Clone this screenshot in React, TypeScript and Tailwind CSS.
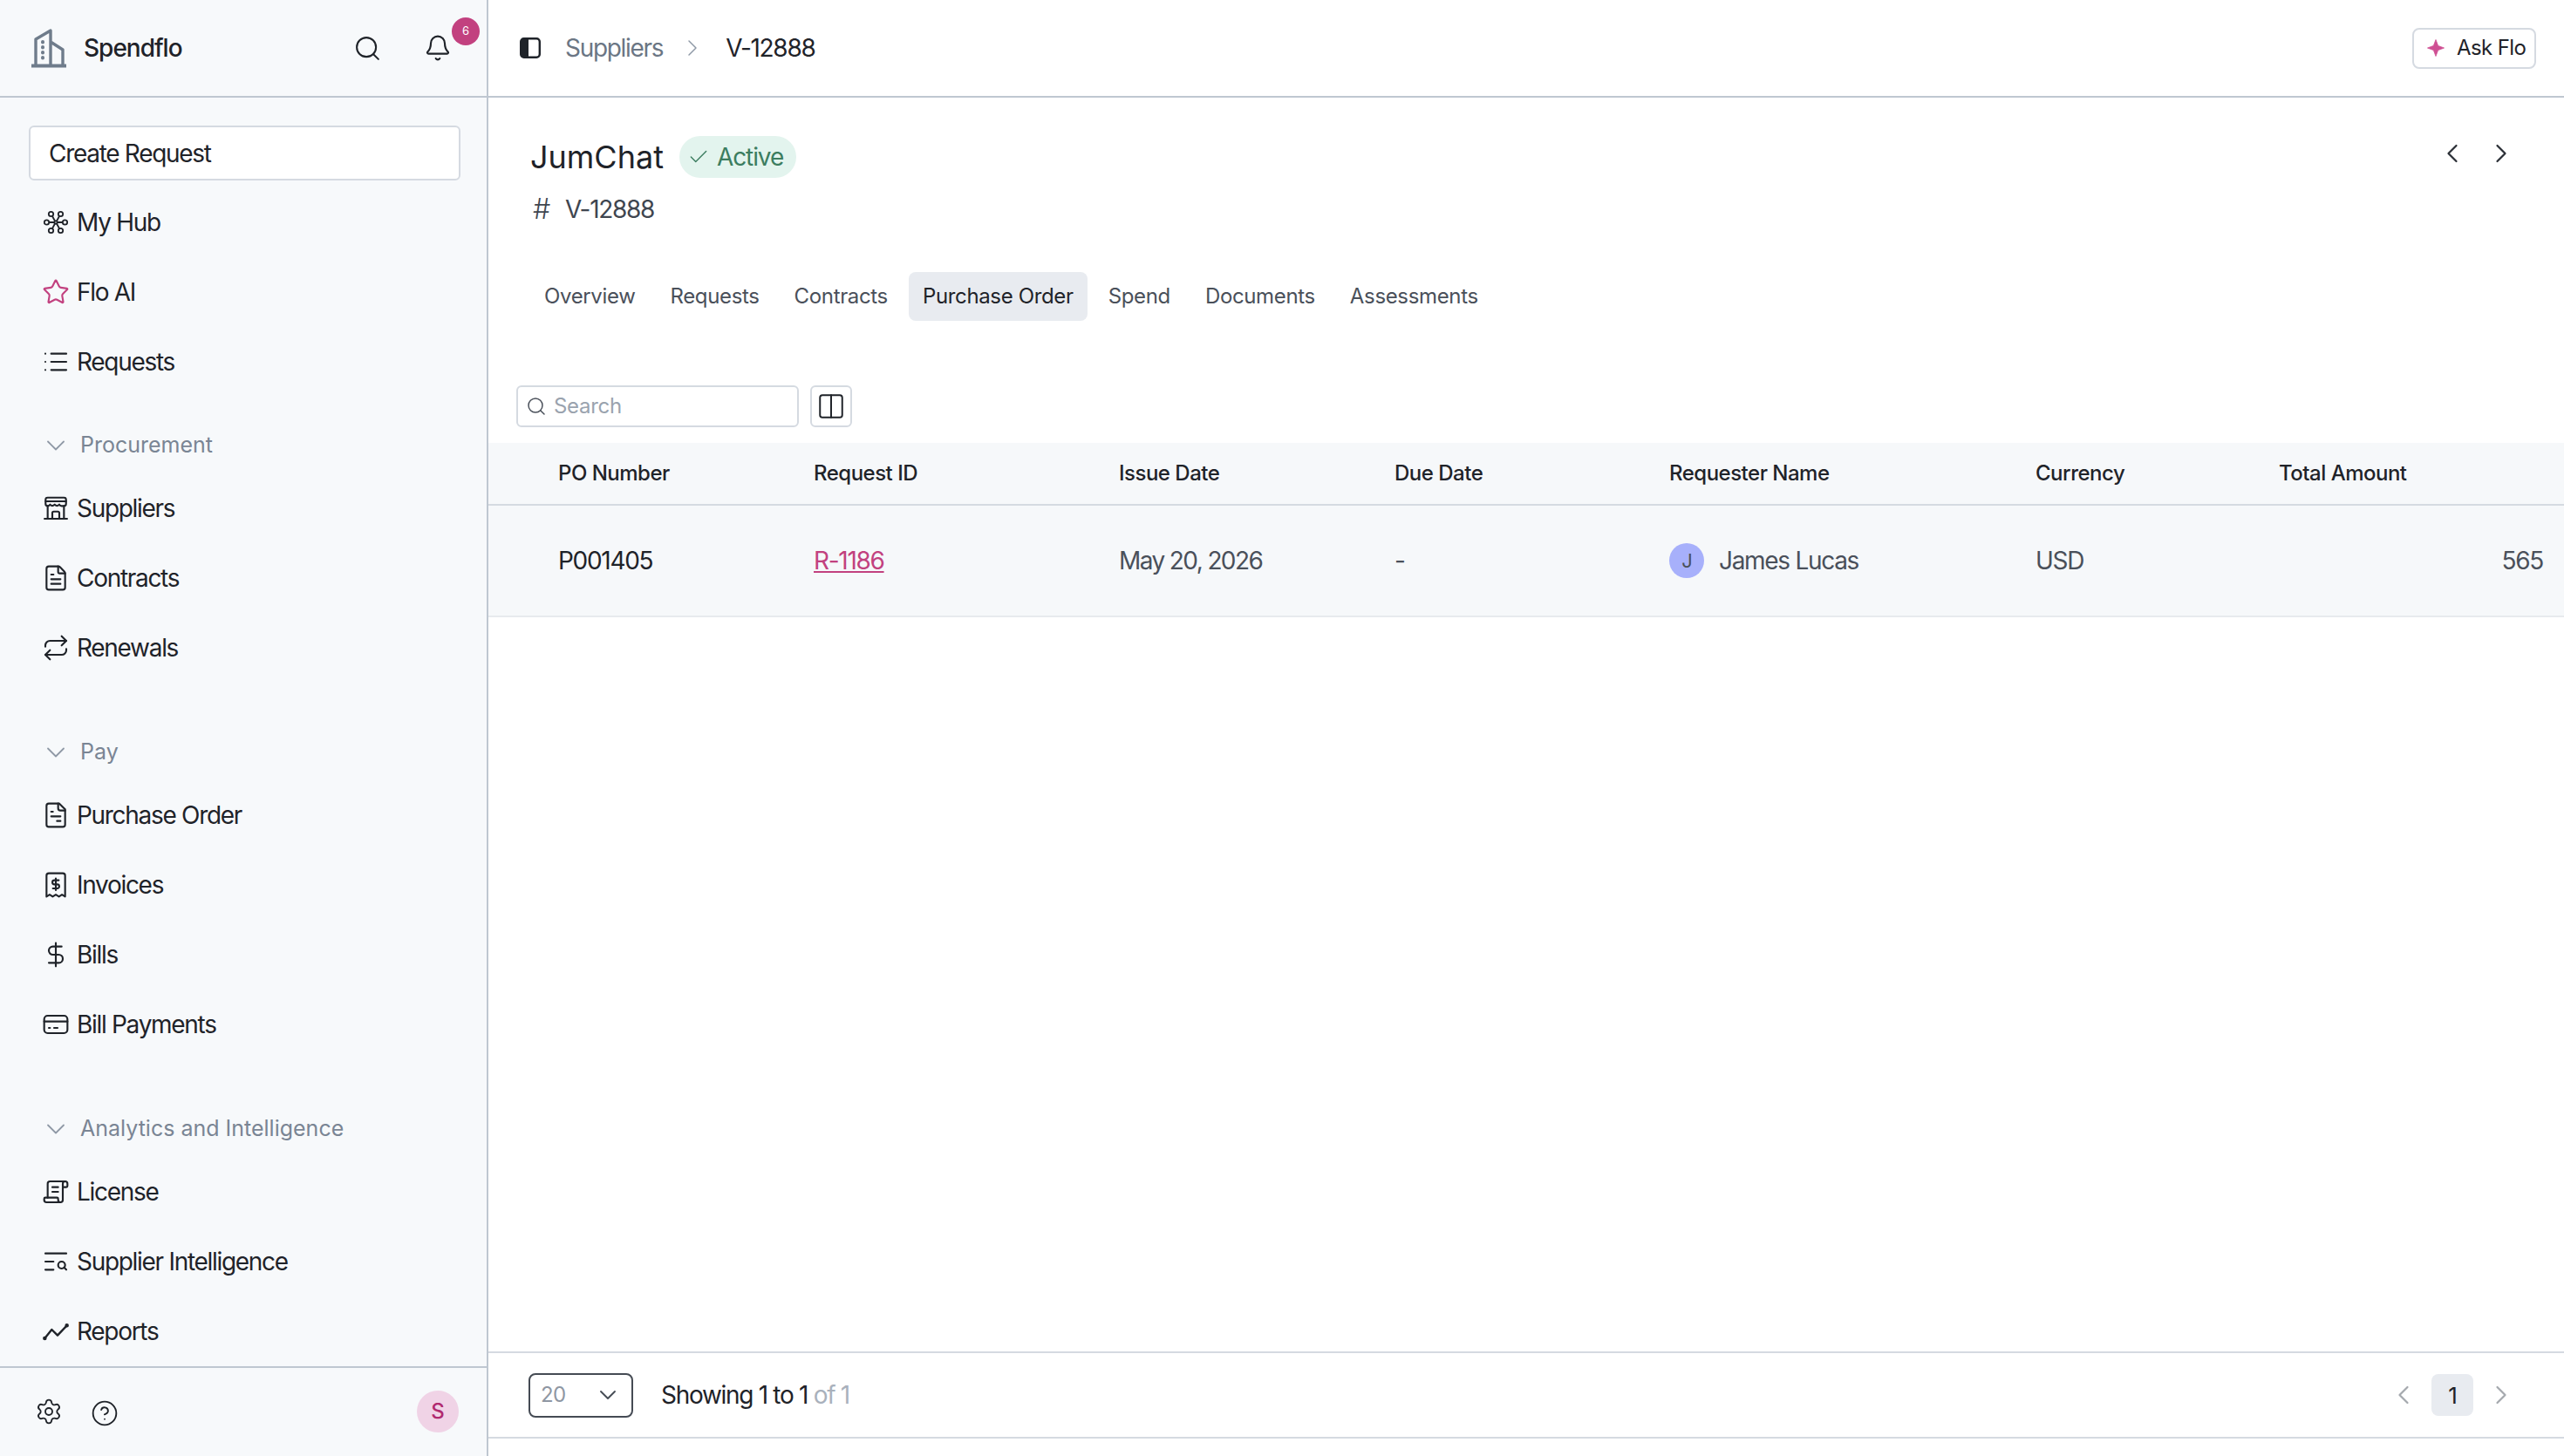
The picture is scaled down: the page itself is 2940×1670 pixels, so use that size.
import React from "react";
import {
  Search, Bell, Check, ChevronRight, ChevronLeft, ChevronDown, Star, List, FileText, Repeat,
  DollarSign, ScrollText, TextSearch, Settings, CircleHelp, Columns2,
} from "lucide-react";

const Hub = ({ className = "" }: { className?: string }) => (
  <svg viewBox="0 0 28 28" className={className} fill="none" stroke="currentColor" strokeWidth="1.8">
    <circle cx="8.500" cy="4.500" r="2.700" /><circle cx="19.500" cy="4.500" r="2.700" />
    <circle cx="3.500" cy="14" r="2.700" /><circle cx="24.500" cy="14" r="2.700" />
    <circle cx="8.500" cy="23.500" r="2.700" /><circle cx="19.500" cy="23.500" r="2.700" />
    <circle cx="14" cy="14" r="1.700" />
    <path d="M10 7l3 5.500M18 7l-3 5.500M6.200 14h6M21.800 14h-6M10 21l3-5.500M18 21l-3-5.500" />
  </svg>
);
const StoreIcon = ({ className = "" }: { className?: string }) => (
  <svg viewBox="0 0 24 24" className={className} fill="none" stroke="currentColor" strokeWidth="1.6" strokeLinecap="round" strokeLinejoin="round">
    <path d="M5 2.800h14a1.800 1.800 0 0 1 1.800 1.800v3.400a2 2 0 0 1-2 2h-1.800a2.500 2.500 0 0 1-2-1.200 2.500 2.500 0 0 1-4 0 2.500 2.500 0 0 1-4 0 2.500 2.500 0 0 1-2 1.200H5.200a2 2 0 0 1-2-2V4.600A1.800 1.800 0 0 1 5 2.800Z" />
    <path d="M3.200 6h17.600M5 10v11M19 10v11M2.300 21h19.400M9 21v-5a1.200 1.200 0 0 1 1.200-1.200h3.600A1.200 1.200 0 0 1 15 16v5" />
  </svg>
);
const PoDoc = ({ className = "" }: { className?: string }) => (
  <svg viewBox="0 0 24 24" className={className} fill="none" stroke="currentColor" strokeWidth="1.6" strokeLinecap="round" strokeLinejoin="round">
    <path d="M15 2H6a2 2 0 0 0-2 2v16a2 2 0 0 0 2 2h12a2 2 0 0 0 2-2V7Z" /><path d="M14 2v4a2 2 0 0 0 2 2h4" />
    <path d="M8 9h1.500M8 13h8M13 17h3" />
  </svg>
);
const Invoice = ({ className = "" }: { className?: string }) => (
  <svg viewBox="0 0 24 24" className={className} fill="none" stroke="currentColor" strokeWidth="1.6" strokeLinecap="round" strokeLinejoin="round">
    <path d="M4 22V4a2 2 0 0 1 2-2h12a2 2 0 0 1 2 2v18l-2.700-1.600L14.700 22 12 20.400 9.300 22l-2.600-1.600Z" />
    <path d="M14.500 8h-3.700a1.500 1.500 0 0 0 0 3.500h2.400a1.500 1.500 0 0 1 0 3.500H9.500M12 6.500v10" />
  </svg>
);
const Card = ({ className = "" }: { className?: string }) => (
  <svg viewBox="0 0 24 24" className={className} fill="none" stroke="currentColor" strokeWidth="1.6" strokeLinecap="round" strokeLinejoin="round">
    <rect x="2" y="4.500" width="20" height="15" rx="3" /><path d="M2 9.500h20M6 15h1M10.500 15h3" />
  </svg>
);
const Trend = ({ className = "" }: { className?: string }) => (
  <svg viewBox="0 0 24 24" className={className} fill="none" stroke="currentColor" strokeWidth="1.8" strokeLinecap="round" strokeLinejoin="round">
    <path d="M2.500 18 8.500 10.500l5 5L21.500 7" />
    <circle cx="2.500" cy="18" r="0.800" fill="currentColor" /><circle cx="21.500" cy="7" r="0.800" fill="currentColor" />
  </svg>
);
const Logo = ({ className = "" }: { className?: string }) => (
  <svg viewBox="0 0 40 46" className={className} fill="none" stroke="#6f7c8b" strokeWidth="3.400" strokeLinejoin="round">
    <path d="M5 43V13L22 3v40M22 16l14 9v18" />
    <path d="M0.500 43.500h39" strokeWidth="4" strokeLinecap="round" />
    <path d="M13 16v.5M13 22v.5M13 28v.5M13 34v.5" strokeWidth="4" strokeLinecap="round" />
  </svg>
);
const Panel = ({ className = "" }: { className?: string }) => (
  <svg viewBox="0 0 24 24" className={className} fill="none">
    <rect x="1.200" y="1.200" width="21.600" height="21.600" rx="3.500" stroke="#1f2329" strokeWidth="2.400" />
    <path d="M4 1.200h6v21.600H4a2.800 2.800 0 0 1-2.800-2.800V4A2.800 2.800 0 0 1 4 1.200Z" fill="#1f2329" />
  </svg>
);
const Spark = ({ className = "" }: { className?: string }) => (
  <svg viewBox="0 0 20 20" className={className}>
    <path d="M10 .5 12.600 7.400 19.500 10 12.600 12.600 10 19.500 7.400 12.600.5 10 7.400 7.400Z" fill="#cf4f93" stroke="#cf4f93" strokeWidth="0.800" strokeLinejoin="round" />
  </svg>
);

const ic = "w-[32px] h-[32px] -mx-[2px] shrink-0 text-[#1f2329]";

function Item({ icon, label }: { icon: React.ReactNode; label: string }) {
  return (
    <div className="h-[80px] flex items-center pl-[50px] gap-[10px] text-[28px] text-[#1f2329] tracking-[-1.3px]">
      {icon}
      <span>{label}</span>
    </div>
  );
}
function Head({ label, mt }: { label: string; mt: string }) {
  return (
    <div className={`h-[64px] flex items-center pl-[50px] gap-[14px] text-[25px] text-[#7a8594] tracking-normal ${mt}`}>
      <ChevronDown className="w-[36px] h-[36px] -mx-[4px] shrink-0 text-[#8f99a6]" strokeWidth={1.2} />
      <span>{label}</span>
    </div>
  );
}

const cols = "grid grid-cols-[293px_350px_316px_315px_420px_279px_1fr] pl-[80px] items-center";

export default function App() {
  return (
    <div className="w-[2940px] h-[1670px] flex bg-white font-['Inter',sans-serif] overflow-hidden">
      <aside className="w-[560px] shrink-0 h-full flex flex-col bg-[#f7f9fb] border-r-2 border-[#bfc7d1]">
        <div className="h-[112px] shrink-0 border-b-2 border-[#bfc7d1] flex items-center pl-[36px] relative">
          <Logo className="w-[40px] h-[46px] mr-[20px]" />
          <span className="text-[28px] font-medium text-[#1f2329] tracking-[-1px]">Spendflo</span>
          <Search className="absolute left-[405px] top-[39px] w-[33px] h-[33px] text-[#1f2329]" strokeWidth={1.5} />
          <Bell className="absolute left-[486px] top-[39px] w-[32px] h-[32px] text-[#1f2329]" strokeWidth={1.6} />
          <span className="absolute left-[518px] top-[20px] w-[32px] h-[32px] rounded-full bg-[#c2417f] text-white text-[13px] flex items-center justify-center">6</span>
        </div>
        <div className="flex-1 min-h-0 overflow-hidden flex flex-col">
          <div className="pt-[32px] pl-[33px] pb-[8px]">
            <div className="w-[495px] h-[63px] rounded-[6px] border-2 border-[#d5dae1] bg-white flex items-center pl-[21px] text-[28px] text-[#1f2329] tracking-[-1.3px]">Create Request</div>
          </div>
          <Item icon={<Hub className="w-[28px] h-[28px] shrink-0 text-[#1f2329]" />} label="My Hub" />
          <Item icon={<Star className="w-[32px] h-[32px] -mx-[2px] shrink-0 text-[#c2417f]" strokeWidth={1.6} />} label="Flo AI" />
          <Item icon={<List className={ic} strokeWidth={1.6} />} label="Requests" />
          <Head label="Procurement" mt="mt-[24px]" />
          <Item icon={<StoreIcon className={ic} />} label="Suppliers" />
          <Item icon={<FileText className={ic} strokeWidth={1.6} />} label="Contracts" />
          <Item icon={<Repeat className={ic} strokeWidth={1.6} />} label="Renewals" />
          <Head label="Pay" mt="mt-[48px]" />
          <Item icon={<PoDoc className={ic} />} label="Purchase Order" />
          <Item icon={<Invoice className={ic} />} label="Invoices" />
          <Item icon={<DollarSign className={ic} strokeWidth={1.6} />} label="Bills" />
          <Item icon={<Card className={ic} />} label="Bill Payments" />
          <Head label="Analytics and Intelligence" mt="mt-[48px]" />
          <Item icon={<ScrollText className={`${ic} -scale-x-100`} strokeWidth={1.6} />} label="License" />
          <Item icon={<TextSearch className={ic} strokeWidth={1.6} />} label="Supplier Intelligence" />
          <Item icon={<Trend className={ic} />} label="Reports" />
        </div>
        <div className="h-[103px] shrink-0 border-t-2 border-[#bfc7d1] flex items-center pl-[40px] pr-[32px] pb-[2px]">
          <Settings className="w-[32px] h-[32px] text-[#1f2329] mr-[32px]" strokeWidth={1.4} />
          <CircleHelp className="w-[32px] h-[32px] mt-[4px] text-[#1f2329]" strokeWidth={1.4} />
          <span className="ml-auto w-[48px] h-[48px] rounded-full bg-[#f0d3e6] text-[#b02a70] text-[24px] font-medium flex items-center justify-center">S</span>
        </div>
      </aside>

      <main className="flex-1 min-w-0 h-full flex flex-col">
        <div className="h-[112px] shrink-0 border-b-2 border-[#bfc7d1] flex items-center pl-[36px] pr-[32px] text-[28px] tracking-[-1.3px]">
          <Panel className="w-[24px] h-[24px] mr-[28px]" />
          <span className="text-[#6b7684]">Suppliers</span>
          <ChevronRight className="w-[32px] h-[32px] ml-[18px] mr-[22px] text-[#8f99a6]" strokeWidth={1.1} />
          <span className="text-[#1f2329]">V-12888</span>
          <div className="ml-auto h-[47px] w-[142px] rounded-[8px] border-2 border-[#d5dae1] flex items-center pl-[15px] gap-[14px] text-[24px] tracking-[-0.6px] text-[#1f2329]">
            <Spark className="w-[20px] h-[20px]" />
            <span>Ask Flo</span>
          </div>
        </div>

        <div className="pl-[48px] pr-[54px] pt-[44px] flex">
          <div className="flex-1">
            <div className="flex items-center gap-[18px]">
              <span className="text-[36px] text-[#1f2329] leading-[48px]">JumChat</span>
              <span className="h-[48px] rounded-full bg-[#e3f4ee] flex items-center pl-[9px] pr-[15px] gap-[8px] text-[28px] text-[#3c7d60] tracking-[-1.1px]">
                <Check className="w-[26px] h-[26px]" strokeWidth={1.3} />
                Active
              </span>
            </div>
            <div className="flex items-center mt-[12px] h-[48px] text-[28px] text-[#3f4650] tracking-[-1.3px]">
              <span className="w-[40px] pl-[3px] text-[32px] font-light">#</span>
              <span>V-12888</span>
            </div>
          </div>
          <div className="flex gap-[20px] h-[40px] items-center">
            <ChevronLeft className="w-[36px] h-[36px] text-[#2b2f36]" strokeWidth={1.5} />
            <ChevronRight className="w-[36px] h-[36px] text-[#2b2f36]" strokeWidth={1.5} />
          </div>
        </div>

        <div className="pl-[48px] mt-[48px] flex gap-[8px] text-[24px] text-[#4a505a] tracking-[-0.35px]">
          {["Overview", "Requests", "Contracts", "Purchase Order", "Spend", "Documents", "Assessments"].map((t) => (
            <div key={t} className={`h-[56px] px-[16px] rounded-[8px] flex items-center ${t === "Purchase Order" ? "bg-[#e8ebf0] text-[#1f2329]" : ""}`}>{t}</div>
          ))}
        </div>

        <div className="pl-[32px] mt-[74px] flex gap-[13px]">
          <div className="w-[324px] h-[48px] rounded-[6px] border-2 border-[#d5dae1] flex items-center pl-[9px] gap-[8px] text-[24px] text-[#9aa3ae] tracking-[-0.3px]">
            <Search className="w-[24px] h-[24px] text-[#4a505a]" strokeWidth={1.5} />
            <span>Search</span>
          </div>
          <div className="w-[48px] h-[48px] rounded-[6px] border-2 border-[#d5dae1] flex items-center justify-center">
            <Columns2 className="w-[34px] h-[34px] text-[#1f2329]" strokeWidth={1.4} />
          </div>
        </div>

        <div className="mt-[18px] bg-[#f6f8fa]">
          <div className={`${cols} h-[72px] border-b-2 border-[#d5dae1] text-[24px] font-medium text-[#1f2329] tracking-[-0.5px]`}>
            <span>PO Number</span><span>Request ID</span><span>Issue Date</span><span>Due Date</span><span>Requester Name</span><span>Currency</span><span>Total Amount</span>
          </div>
          <div className={`${cols} h-[128px] border-b-2 border-[#e7eaee] text-[28px] text-[#4a505a] tracking-[-1.3px]`}>
            <span className="text-[#1f2329]">P001405</span>
            <span className="text-[#c2417f] underline">R-1186</span>
            <span className="tracking-[-1.6px]">May 20, 2026</span>
            <span>-</span>
            <span className="flex items-center gap-[17px]">
              <span className="w-[40px] h-[40px] rounded-full bg-[#a7b0fb] text-[22px] flex items-center justify-center">J</span>
              James Lucas
            </span>
            <span>USD</span>
            <span className="text-right pr-[24px]">565</span>
          </div>
        </div>

        <div className="mt-auto mb-[20px] h-[100px] border-y-2 border-[#d5dae1] flex items-center pl-[46px] pr-[54px] text-[28px] tracking-[-1.3px]">
          <div className="w-[120px] h-[51px] rounded-[8px] border-2 border-[#454b54] flex items-center pl-[12px] text-[24px] text-[#8f97a3] tracking-[-0.6px]">
            <span>20</span>
            <ChevronDown className="ml-auto mr-[11px] w-[32px] h-[32px] text-[#454b54]" strokeWidth={1.4} />
          </div>
          <span className="ml-[32px] text-[#1f2329]">Showing 1 to 1 <span className="text-[#a9b1bc]">of 1</span></span>
          <div className="ml-auto flex items-center gap-[14px]">
            <ChevronLeft className="w-[36px] h-[36px] text-[#a5a9ae]" strokeWidth={1.5} />
            <span className="w-[48px] h-[48px] rounded-[8px] bg-[#e8ebf0] flex items-center justify-center text-[#1f2329] text-[26px]">1</span>
            <ChevronRight className="w-[36px] h-[36px] text-[#a5a9ae]" strokeWidth={1.5} />
          </div>
        </div>
      </main>
    </div>
  );
}
